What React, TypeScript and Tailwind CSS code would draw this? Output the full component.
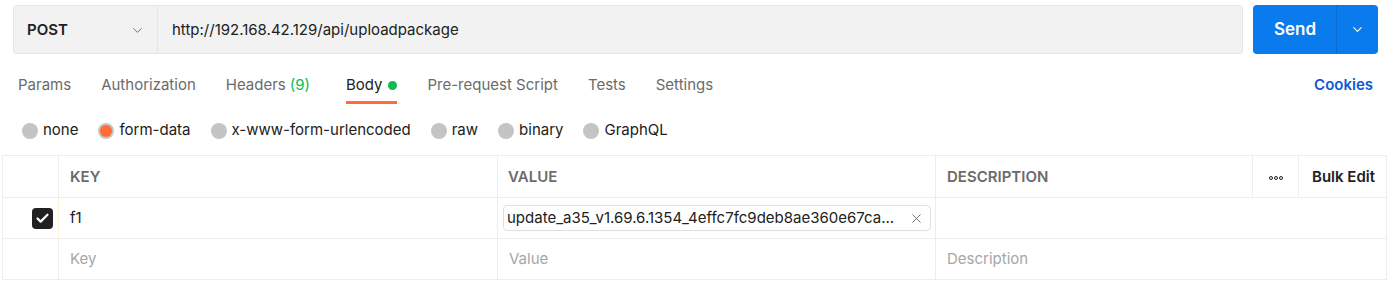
import React from 'react';
import { ChevronDown, X, Check } from 'lucide-react';

const tabs = [
  { label: 'Params' },
  { label: 'Authorization' },
  { label: 'Headers', count: '(9)' },
  { label: 'Body', active: true },
  { label: 'Pre-request Script' },
  { label: 'Tests' },
  { label: 'Settings' },
];

const bodyTypes = ['none', 'form-data', 'x-www-form-urlencoded', 'raw', 'binary', 'GraphQL'];

const App: React.FC = () => {
  return (
    <div className="w-[1392px] h-[283px] bg-white overflow-hidden font-['Inter',sans-serif] text-[15px] text-[#212121]">
      {/* URL bar */}
      <div className="flex items-stretch pt-[5px] pl-[13px] pr-[14px] h-[54px]">
        <div className="flex flex-1 bg-[#f2f2f2] border border-[#e6e6e6] rounded-[4px]">
          <div className="w-[144px] flex items-center justify-between pl-[13px] pr-[12px] pt-[2px] border-r border-[#e6e6e6]">
            <span className="font-semibold">POST</span>
            <ChevronDown size={15} strokeWidth={1.5} className="text-[#6b6b6b]" />
          </div>
          <div className="flex items-center pl-[14px] pt-[2px] text-[#212121]">http://192.168.42.129/api/uploadpackage</div>
        </div>
        <div className="ml-[10px] w-[125px] flex bg-[#097bed] rounded-[4px] text-white">
          <div className="flex-1 flex items-center justify-center font-semibold text-[17px] border-r border-[#0a6cd0] pl-[1px] pt-[1px]">Send</div>
          <div className="w-[41px] flex items-center justify-center">
            <ChevronDown size={15} strokeWidth={1.8} />
          </div>
        </div>
      </div>

      {/* Tabs */}
      <div className="flex items-stretch h-[50px] pl-[18px] pr-[19px]">
        {tabs.map((t) => (
          <div key={t.label} className={`${t.count ? 'mr-[36px]' : 'mr-[30px]'} flex flex-col`}>
            <div className="flex-1 flex items-center pt-[15px]">
              <span className={t.active ? 'text-[#212121]' : 'text-[#6b6b6b]'}>{t.label}</span>
              {t.count && <span className="ml-[4px] text-[#0cbb52]">{t.count}</span>}
              {t.active && <span className="ml-[6px] w-[9px] h-[9px] rounded-full bg-[#0cbb52]" />}
            </div>
            <div className={`h-[3px] ${t.active ? 'bg-[#ff6c37]' : 'bg-transparent'}`} />
          </div>
        ))}
        <div className="flex-1" />
        <div className="flex items-center pt-[15px] pb-[3px] text-[#0b5bd3] font-semibold">Cookies</div>
      </div>

      {/* Body types */}
      <div className="flex items-center h-[51px] pl-[22px] pt-[2px]">
        {bodyTypes.map((b) => {
          const active = b === 'form-data';
          return (
            <div key={b} className="flex items-center mr-[20px]">
              <span className="w-[16px] h-[16px] rounded-full flex items-center justify-center bg-[#c4c4c4]">
                {active && <span className="w-[12px] h-[12px] rounded-full bg-[#ff6c37]" />}
              </span>
              <span className="ml-[5px]">{b}</span>
            </div>
          );
        })}
      </div>

      {/* Table */}
      <div className="ml-[2px] mr-[5px] border-l border-r border-t border-[#ededed]">
        <div className="flex h-[42px] border-b border-[#ededed] text-[#6b6b6b] font-semibold">
          <div className="w-[56px] border-r border-[#ededed]" />
          <div className="w-[439px] border-r border-[#ededed] flex items-center pl-[11px] pt-[2px]">KEY</div>
          <div className="w-[438px] border-r border-[#ededed] flex items-center pl-[10px] pt-[2px]">VALUE</div>
          <div className="w-[317px] border-r border-[#ededed] flex items-center pl-[11px] pt-[2px]">DESCRIPTION</div>
          <div className="w-[46px] border-r border-[#ededed] flex items-center justify-center pt-[2px]">
            <span className="flex gap-[1px]">
              <span className="w-[4px] h-[4px] rounded-full border border-[#212121]" />
              <span className="w-[4px] h-[4px] rounded-full border border-[#212121]" />
              <span className="w-[4px] h-[4px] rounded-full border border-[#212121]" />
            </span>
          </div>
          <div className="flex-1 flex items-center pl-[13px] pt-[2px] text-[#212121]">Bulk Edit</div>
        </div>
        <div className="flex h-[41px] border-b border-[#ededed]">
          <div className="w-[56px] border-r border-[#fdf3d7] flex items-center justify-center pl-[26px] pr-[2px]">
            <span className="w-[21px] h-[21px] rounded-[4px] bg-[#212121] flex items-center justify-center text-white">
              <Check size={15} strokeWidth={3.5} />
            </span>
          </div>
          <div className="w-[439px] border-r border-[#ededed] flex items-center pl-[11px]">f1</div>
          <div className="w-[438px] border-r border-[#ededed] flex items-center pl-[5px] pr-[4px]">
            <div className="flex-1 h-[26px] border border-[#e0e0e0] rounded-[4px] flex items-center pl-[3px] pr-[6px]">
              <span className="flex-1">update_a35_v1.69.6.1354_4effc7fc9deb8ae360e67ca...</span>
              <X size={15} strokeWidth={1.5} className="text-[#6b6b6b]" />
            </div>
          </div>
          <div className="flex-1" />
        </div>
        <div className="flex h-[41px] border-b border-[#ededed] text-[#a6a6a6]">
          <div className="w-[56px] border-r border-[#ededed]" />
          <div className="w-[439px] border-r border-[#ededed] flex items-center pl-[11px]">Key</div>
          <div className="w-[438px] border-r border-[#ededed] flex items-center pl-[11px]">Value</div>
          <div className="flex-1 flex items-center pl-[11px]">Description</div>
        </div>
      </div>
    </div>
  );
};

export default App;
